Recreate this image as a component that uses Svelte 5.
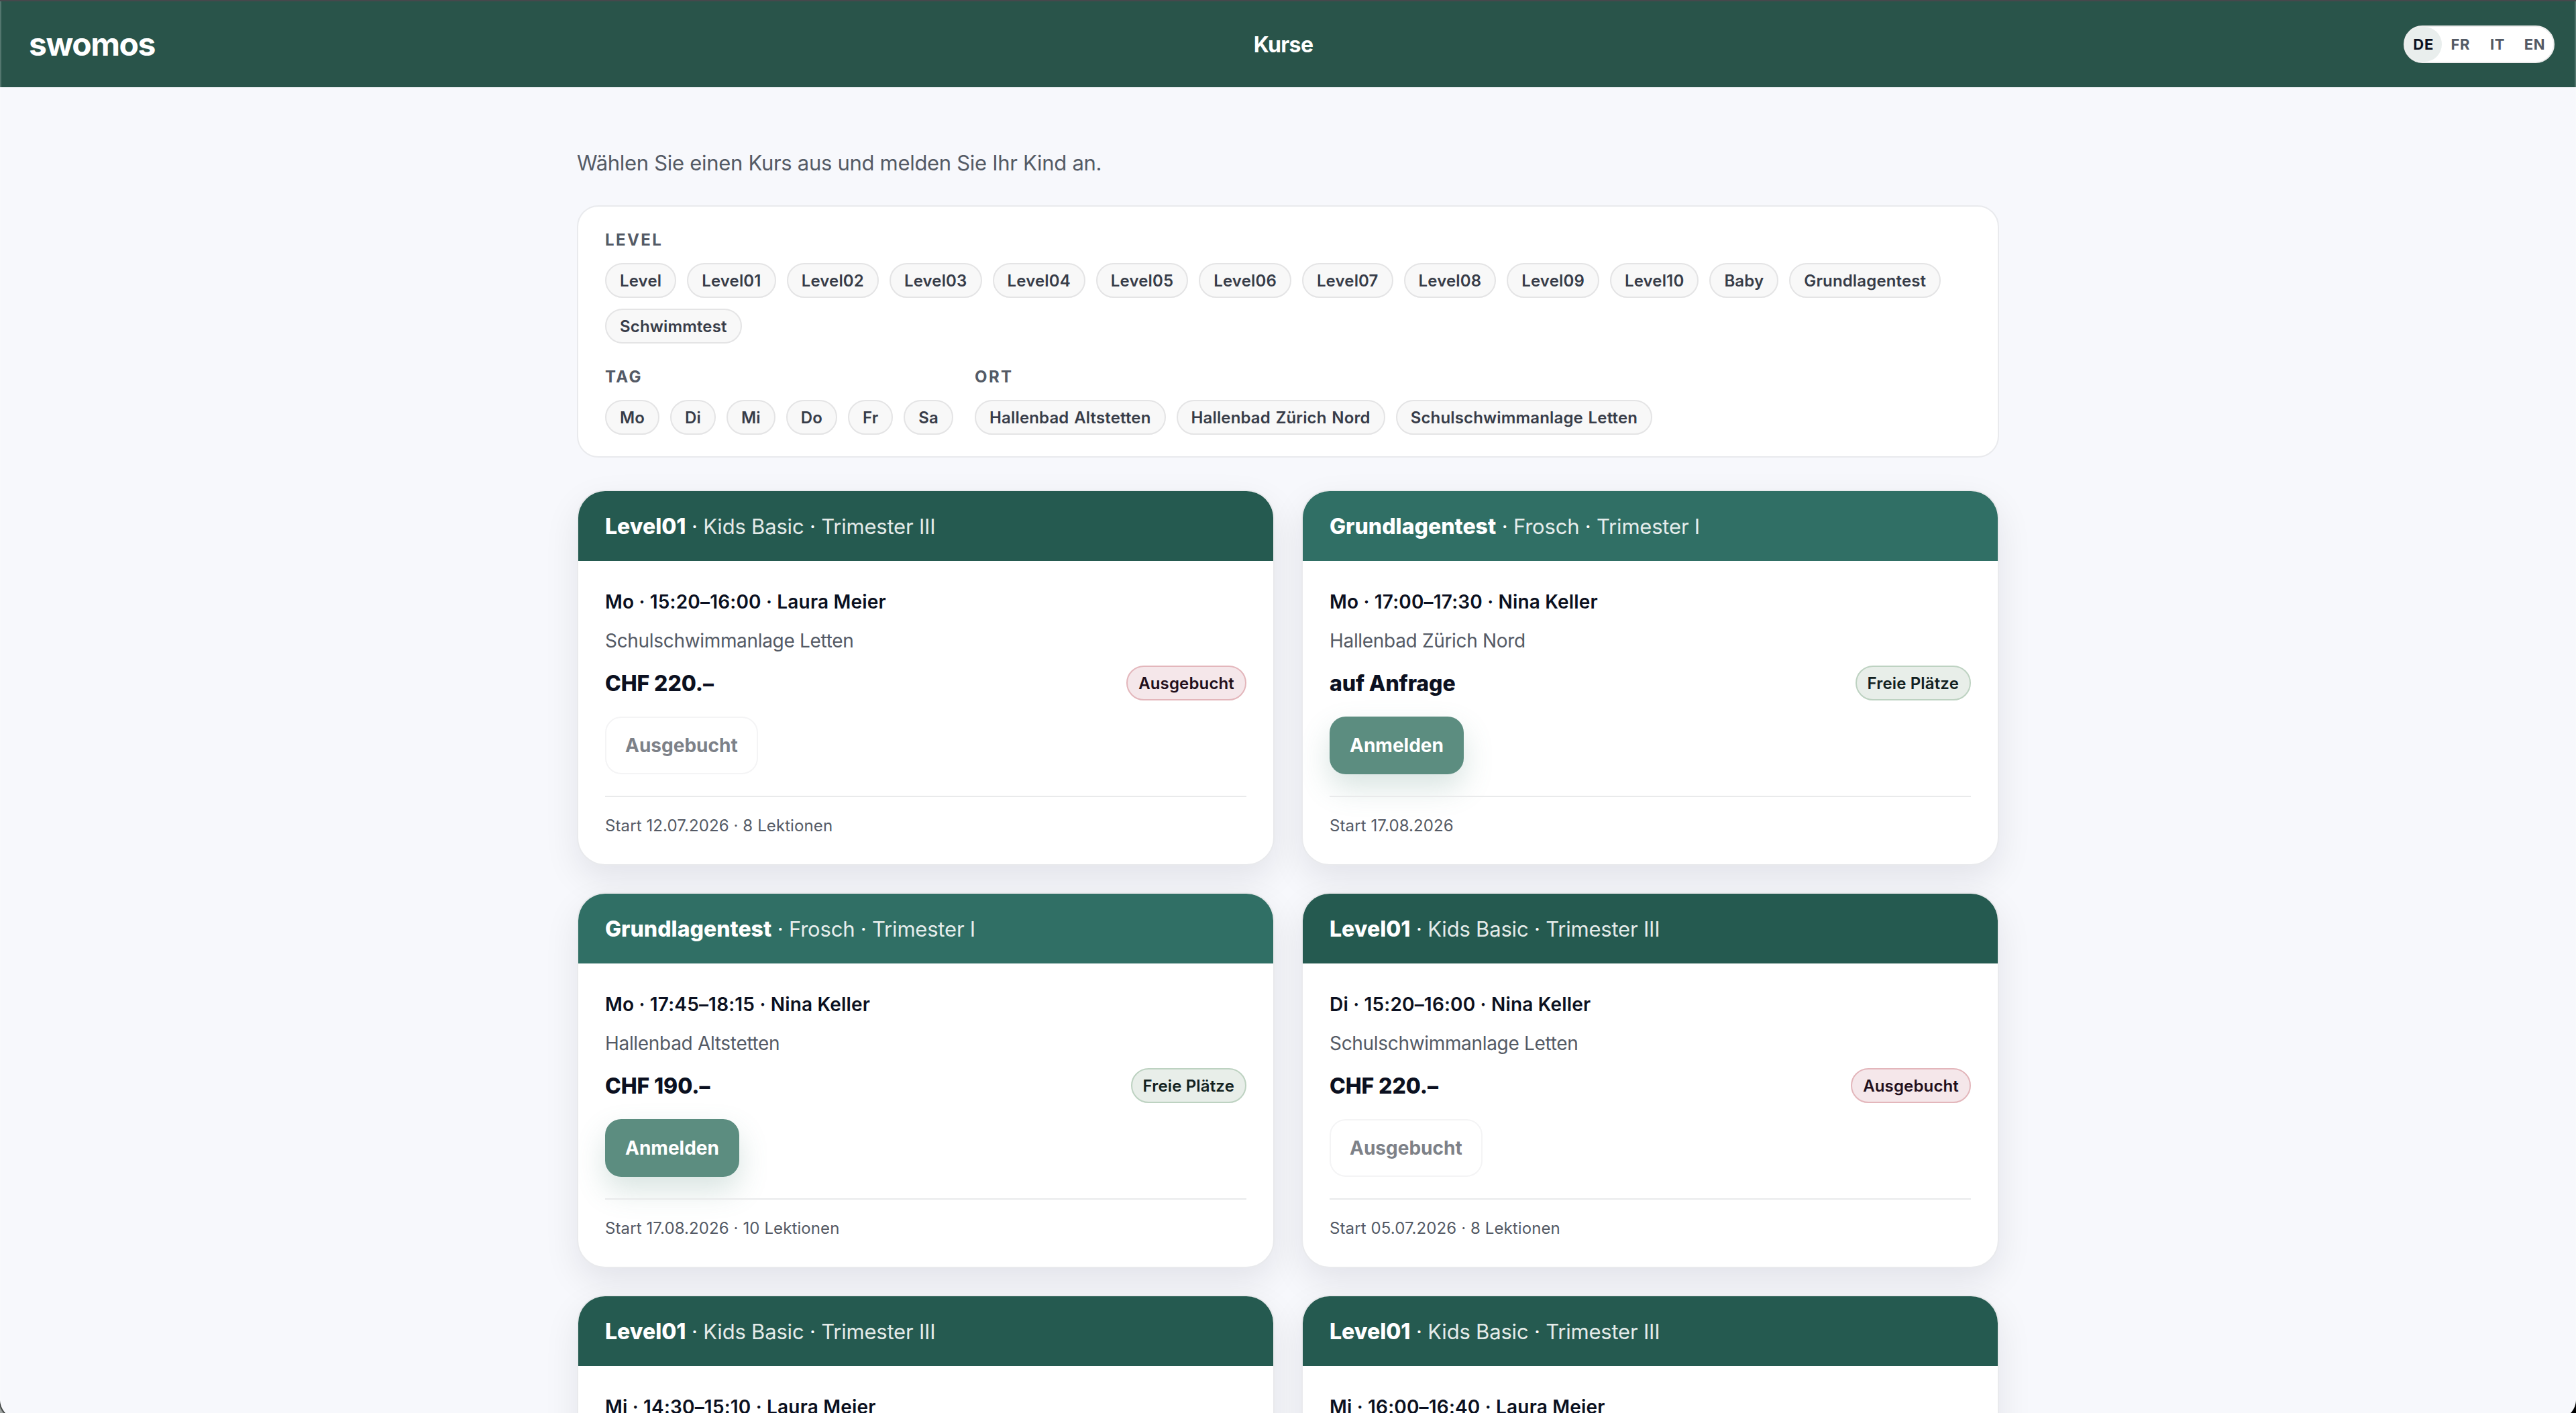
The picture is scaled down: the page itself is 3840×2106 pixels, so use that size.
<script lang="ts">
    interface Course {
        level: string;
        name: string;
        term: string;
        time: string;
        teacher: string;
        place: string;
        price: string;
        full: boolean;
        start: string;
    }

    const languages = ["DE", "FR", "IT", "EN"];
    const levels = [
        "Level", "Level01", "Level02", "Level03", "Level04", "Level05", "Level06",
        "Level07", "Level08", "Level09", "Level10", "Baby", "Grundlagentest", "Schwimmtest",
    ];
    const days = ["Mo", "Di", "Mi", "Do", "Fr", "Sa"];
    const places = ["Hallenbad Altstetten", "Hallenbad Zürich Nord", "Schulschwimmanlage Letten"];

    const kidsBasic = { level: "Level01", name: "Kids Basic", term: "Trimester III" };
    const frosch = { level: "Grundlagentest", name: "Frosch", term: "Trimester I" };

    const courses: Course[] = [
        { ...kidsBasic, time: "Mo · 15:20–16:00", teacher: "Laura Meier", place: places[2], price: "CHF 220.–", full: true, start: "Start 12.07.2026 · 8 Lektionen" },
        { ...frosch, time: "Mo · 17:00–17:30", teacher: "Nina Keller", place: places[1], price: "auf Anfrage", full: false, start: "Start 17.08.2026" },
        { ...frosch, time: "Mo · 17:45–18:15", teacher: "Nina Keller", place: places[0], price: "CHF 190.–", full: false, start: "Start 17.08.2026 · 10 Lektionen" },
        { ...kidsBasic, time: "Di · 15:20–16:00", teacher: "Nina Keller", place: places[2], price: "CHF 220.–", full: true, start: "Start 05.07.2026 · 8 Lektionen" },
        { ...kidsBasic, time: "Mi · 14:30–15:10", teacher: "Laura Meier", place: places[2], price: "CHF 220.–", full: true, start: "Start 07.07.2026 · 8 Lektionen" },
        { ...kidsBasic, time: "Mi · 16:00–16:40", teacher: "Laura Meier", place: places[2], price: "CHF 220.–", full: true, start: "Start 07.07.2026 · 8 Lektionen" },
    ];

    let language = $state("DE");
</script>

{#snippet filter(title: string, options: string[])}
    <div>
        <h2>{title}</h2>
        <div class="chips">
            {#each options as option}
                <button class="chip">{option}</button>
            {/each}
        </div>
    </div>
{/snippet}

<div class="page">
    <header>
        <span class="logo">swomos</span>
        <h1>Kurse</h1>
        <nav>
            {#each languages as code}
                <button class:active={language === code} onclick={() => (language = code)}>
                    {code}
                </button>
            {/each}
        </nav>
    </header>

    <main>
        <p class="intro">Wählen Sie einen Kurs aus und melden Sie Ihr Kind an.</p>

        <section class="filters">
            {@render filter("Level", levels)}
            <div class="split">
                {@render filter("Tag", days)}
                {@render filter("Ort", places)}
            </div>
        </section>

        <section class="courses">
            {#each courses as course}
                <article>
                    <h3 class:light={course.level === "Grundlagentest"}>
                        <strong>{course.level}</strong> · <span>{course.name}</span> · <span>{course.term}</span>
                    </h3>
                    <div class="body">
                        <p class="time">{course.time} · {course.teacher}</p>
                        <p class="place">{course.place}</p>
                        <div class="row">
                            <span class="price">{course.price}</span>
                            <span class="badge" class:full={course.full}>
                                {course.full ? "Ausgebucht" : "Freie Plätze"}
                            </span>
                        </div>
                        <button class="action" disabled={course.full}>
                            {course.full ? "Ausgebucht" : "Anmelden"}
                        </button>
                        <footer>{course.start}</footer>
                    </div>
                </article>
            {/each}
        </section>
    </main>

    <div class="frame"></div>
</div>

<style>
    :global(body) {
        background: #f7f8fc;
    }

    .page {
        position: relative;
        height: 2106px;
        overflow: hidden;
        font-family: Inter, sans-serif;
        font-size: 32px;
        line-height: 1.5;
        color: #0b1020;
    }

    h1,
    h2,
    h3,
    p {
        margin: 0;
    }

    button {
        font: inherit;
        color: inherit;
    }

    header {
        display: flex;
        justify-content: space-between;
        align-items: center;
        box-sizing: border-box;
        height: 130px;
        padding: 0 32px 0 43px;
        border-top: 2px solid #46484c;
        background: #29544a;
        color: #fff;
    }

    .logo {
        margin-right: 12px;
        font-size: 48px;
        font-weight: 700;
        letter-spacing: -0.03em;
    }

    h1 {
        padding-top: 2px;
        font-size: 32px;
        font-weight: 700;
        letter-spacing: -0.02em;
    }

    nav {
        display: flex;
        box-sizing: border-box;
        width: 225px;
        border: 2px solid #ececec;
        border-radius: 28px;
        background: #fff;
    }

    nav button {
        flex: 1 1 0;
        height: 52px;
        padding: 0;
        border: 0;
        border-radius: 27px;
        background: none;
        font-size: 22px;
        font-weight: 700;
        letter-spacing: 0.03em;
        color: #545a65;
    }

    nav button.active {
        background: #e9eeed;
        color: #0b1020;
    }

    main {
        width: 2120px;
        margin: 0 auto;
        padding-top: 89px;
    }

    .intro {
        margin-bottom: 39px;
        font-size: 31px;
        line-height: 48px;
        letter-spacing: -0.3px;
        color: #545a65;
    }

    .filters {
        display: flex;
        flex-direction: column;
        gap: 32px;
        padding: 32px 40px;
        border: 2px solid #e9eaed;
        border-radius: 32px;
        background: #fff;
    }

    .split {
        display: flex;
        gap: 32px;
    }

    h2 {
        margin-bottom: 16px;
        font-size: 24px;
        font-weight: 700;
        letter-spacing: 0.1em;
        text-transform: uppercase;
        color: #545a65;
    }

    .chips {
        display: flex;
        flex-wrap: wrap;
        gap: 16px;
    }

    .chip {
        height: 52px;
        padding: 2px 20px 0;
        border: 2px solid #e4e4e5;
        border-radius: 26px;
        background: #f8f8f8;
        font-size: 24px;
        font-weight: 600;
        letter-spacing: 0.15px;
        word-spacing: 1.5px;
        color: #373c48;
    }

    .courses {
        display: grid;
        grid-template-columns: 1fr 1fr;
        gap: 40px;
        margin-top: 48px;
    }

    article {
        overflow: hidden;
        border: 2px solid #e9eaed;
        border-radius: 42px;
        background: #fff;
        box-shadow: 0 20px 52px rgba(11, 16, 32, 0.085);
    }

    h3 {
        padding: 29px 40px 27px;
        font-size: 31px;
        line-height: 48px;
        font-weight: 400;
        letter-spacing: -0.2px;
        background: #255a50;
        color: #fff;
    }

    h3.light {
        background: #306f65;
    }

    h3 strong {
        font-size: 32px;
        font-weight: 800;
        letter-spacing: 0;
    }

    h3 span {
        opacity: 0.88;
    }

    .body {
        padding: 40px 40px 39px;
    }

    .time {
        font-size: 28px;
        font-weight: 600;
        letter-spacing: 0.18px;
    }

    .place {
        margin: 16px 0;
        font-size: 28px;
        letter-spacing: -0.32px;
        color: #545a65;
    }

    .row {
        display: flex;
        justify-content: space-between;
        align-items: center;
    }

    .price {
        padding-top: 2px;
        font-weight: 800;
        letter-spacing: -0.1px;
    }

    .badge {
        box-sizing: border-box;
        height: 52px;
        padding: 0 16px;
        border: 2px solid #bdd2c1;
        border-radius: 26px;
        background: #e8eee9;
        font-size: 24px;
        line-height: 50px;
        font-weight: 600;
        letter-spacing: 0.15px;
        color: #12211f;
    }

    .badge.full {
        border-color: #e3b6bb;
        background: #f5e7ea;
        color: #220f1b;
    }

    .action {
        display: block;
        height: 86px;
        margin: 24px 0 32px;
        padding: 0 30px;
        border: 0;
        border-radius: 24px;
        background: #5c8d80;
        box-shadow: 0 20px 44px rgba(92, 141, 128, 0.24);
        font-size: 28px;
        font-weight: 700;
        color: #fff;
    }

    .action:disabled {
        padding: 0 28px;
        border: 2px solid #f4f4f5;
        background: #fff;
        box-shadow: none;
        color: #7d8188;
    }

    footer {
        padding-top: 25px;
        border-top: 2px solid #e9eaeb;
        font-size: 24px;
        letter-spacing: 0.1px;
        color: #545a65;
    }

    /* window edge with its rounded bottom corners */
    .frame {
        position: absolute;
        inset: 2px 0 0;
        border: solid rgba(255, 255, 255, 0.2);
        border-width: 0 2px;
        pointer-events: none;
    }

    .frame::before,
    .frame::after {
        content: "";
        position: absolute;
        bottom: 0;
        width: 29px;
        height: 20px;
    }

    .frame::before {
        left: -2px;
        background: radial-gradient(circle at 29px 0, transparent 28.5px, #2c302f 29.5px, #a3a8a6 32px);
    }

    .frame::after {
        right: -2px;
        background: radial-gradient(circle at 0 0, transparent 28.5px, #000 29.5px);
    }
</style>
